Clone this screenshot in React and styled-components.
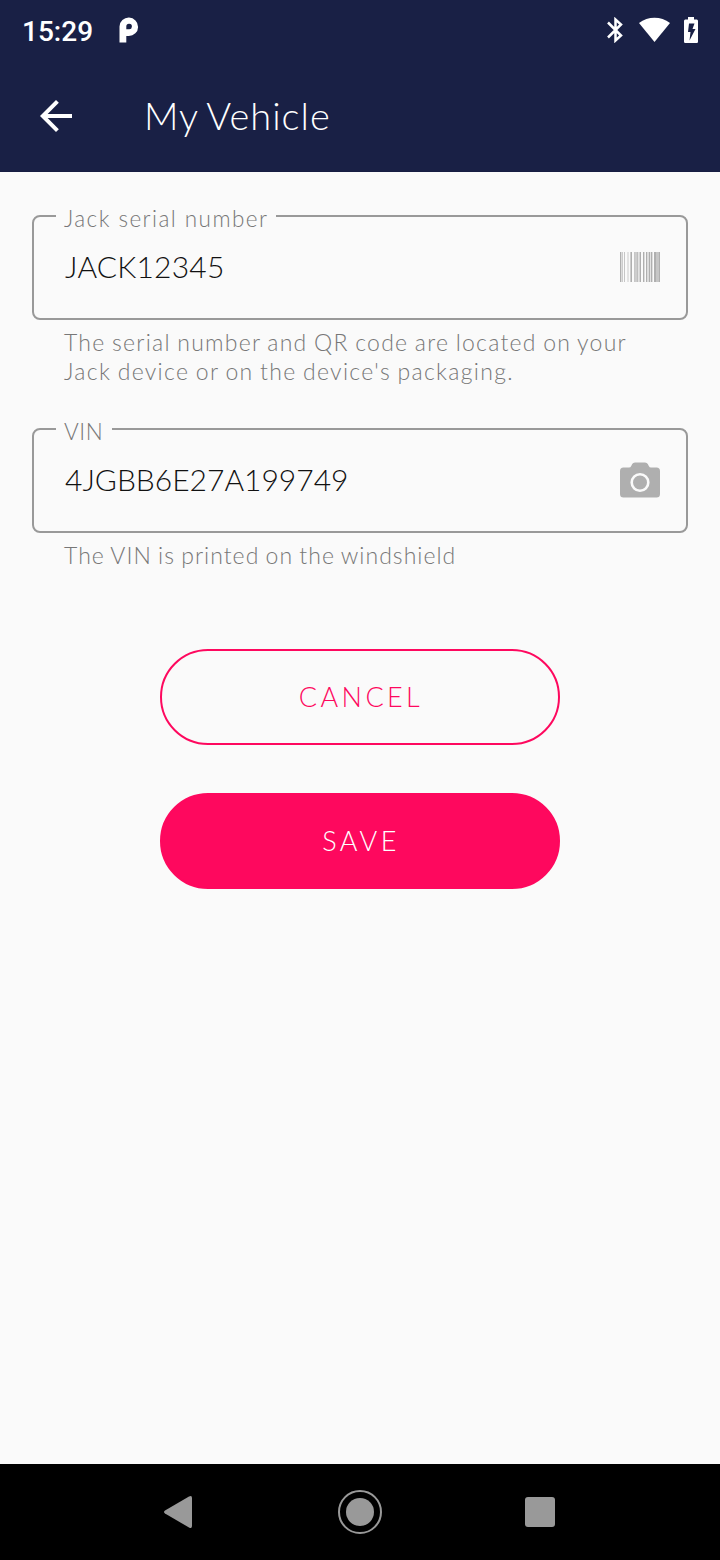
import React from 'react';
import styled, { createGlobalStyle } from 'styled-components';

const GlobalStyle = createGlobalStyle`
	* {
		box-sizing: border-box;
	}

	body {
		margin: 0;
		background: #fafafa;
		font-family: Lato, "Liberation Sans", sans-serif;
		font-weight: 300;
	}
`;

const Screen = styled.div`
	display: flex;
	flex-direction: column;
	width: 720px;
	height: 1560px;
	background: #fafafa;
`;

const StatusBar = styled.div`
	display: flex;
	align-items: center;
	height: 60px;
	padding: 0 22px;
	background: #192045;
	color: #fff;
`;

const Clock = styled.span`
	width: 97px;
	padding-top: 3px;
	font-family: Roboto, sans-serif;
	font-size: 28px;
	font-weight: 500;
	line-height: 57px;
`;

const StatusIcons = styled.div`
	display: flex;
	align-items: center;
	gap: 14px;
	margin-left: auto;
`;

const Header = styled.header`
	display: flex;
	align-items: center;
	height: 112px;
	padding-left: 40px;
	background: #192045;
	box-shadow: inset 0 -1px 0 #171d42;
	color: #fff;
`;

const BackButton = styled.button`
	display: flex;
	width: 104px;
	padding: 0;
	border: 0;
	background: none;
	color: inherit;
`;

const Title = styled.h1`
	margin: 0;
	padding-bottom: 2px;
	font-size: 38px;
	font-weight: 300;
	line-height: 48px;
	letter-spacing: 1px;
	word-spacing: -2px;
`;

const Form = styled.form`
	display: flex;
	flex: 1;
	flex-direction: column;
	padding: 30px 32px 0;
`;

const FieldGroup = styled.div`
	height: ${props => props.$height}px;
`;

const Outline = styled.fieldset`
	display: block;
	height: 118px;
	margin: 0;
	padding: 0 26px 0 31px;
	border: 2px solid #999;
	border-radius: 8px;
`;

const Label = styled.legend`
	height: 28px;
	width: ${props => props.$width}px;
	margin-left: -9px;
	padding: 3px 0 0 8px;
	color: #777;
	font-size: 22.500px;
	line-height: 28px;
	letter-spacing: ${props => props.$spacing}px;
	white-space: nowrap;
`;

const InputRow = styled.div`
	display: flex;
	align-items: center;
	justify-content: space-between;
	height: 74px;
`;

const Value = styled.span`
	padding-bottom: 2px;
	color: #111;
	font-size: 30px;
	line-height: 40px;
	letter-spacing: ${props => props.$spacing}px;
`;

const Hint = styled.p`
	margin: 0;
	padding: 8px 0 0 32px;
	color: #777;
	font-size: 23px;
	line-height: 29px;
	word-spacing: -1px;
	white-space: nowrap;
`;

const HintLine = styled.span`
	display: block;
	letter-spacing: ${props => props.$spacing}px;
`;

const Actions = styled.div`
	display: flex;
	flex-direction: column;
	align-items: center;
	gap: 48px;
`;

const PillButton = styled.button`
	width: 400px;
	height: 96px;
	padding: 0 0 2px 2px;
	border: 2px solid #fe085e;
	border-radius: 48px;
	background: ${props => props.$filled ? '#fe085e' : 'transparent'};
	color: ${props => props.$filled ? '#fff' : '#fe085e'};
	font-family: inherit;
	font-size: 27px;
	font-weight: 300;
	letter-spacing: 3.400px;
`;

const NavBar = styled.nav`
	display: flex;
	align-items: center;
	justify-content: space-between;
	height: 96px;
	padding: 0 165px 0 164px;
	background: #000;
`;

// [x, opacity] of every bar, one unit wide
const BARS = [
	[0, 1], [1, .4], [2, .6], [4, .7], [7, .3], [8, .3], [10, .6], [11, 1],
	[14, .7], [15, .6], [16, .6], [17, .8], [18, .3], [19, .5], [20, 1],
	[23, 1], [24, .4], [26, 1], [27, .4], [28, .4], [29, 1], [30, .3], [31, 1],
	[32, .4], [34, 1], [35, 1], [36, .7], [37, .7], [38, .7], [39, 1],
];

const BarcodeIcon = () => (
	<svg width="40" height="30" viewBox="0 0 40 30" fill="#afafaf" shapeRendering="crispEdges">
		{BARS.map(([x, opacity]) => <rect key={x} x={x} width="1" height="30" opacity={opacity} />)}
	</svg>
);

const CameraIcon = () => (
	<svg width="40" height="36" viewBox="0 0 40 36">
		<path fill="#afafaf" d="M3.500 5.500H9q1.500 0 2.200-1.500l1-2Q13 .5 15 .5h10q2 0 2.800 1.500l1 2q.7 1.500 2.200 1.500h5.500Q40 5.500 40 9v23q0 3.500-3.500 3.500h-33Q0 35.500 0 32V9q0-3.500 3.500-3.500z" />
		<circle cx="20" cy="20.500" r="8.300" fill="none" stroke="#fafafa" strokeWidth="2.600" />
	</svg>
);

const ParkingIcon = () => (
	<svg width="20" height="26" viewBox="0 0 20 26">
		<path fill="#fff" fillRule="evenodd" d="M.5 25.500V9.500a9.300 9.200 0 1 1 9.300 9.500H7.300v6.500zM7.300 12.300h2.500a2.800 2.800 0 1 0-2.500-2.800z" />
	</svg>
);

const BluetoothIcon = () => (
	<svg width="18" height="26" viewBox="0 0 18 26" fill="none" stroke="#fff" strokeWidth="2.500">
		<path d="M2 5.500l13 13L9.500 23.500V2.500l5.500 5-13 13" />
	</svg>
);

const WifiIcon = () => (
	<svg width="32" height="26" viewBox="0 0 32 26">
		<path fill="#fff" d="M1 6C10-1 23-1 32 6L16.500 25z" />
	</svg>
);

const BatteryIcon = () => (
	<svg width="14" height="26" viewBox="0 0 14 26">
		<path fill="#fff" fillRule="evenodd" d="M4 0h6v2.500h2.800Q14 2.500 14 4v20.700q0 1.300-1.200 1.300H1.200Q0 26 0 24.700V4q0-1.500 1.200-1.500H4zM5 6.500L4 15h2.500L5.500 23.500l6-11.500H8.500L10.500 6.500z" />
	</svg>
);

const App = () => (
	<Screen>
		<GlobalStyle />

		<StatusBar>
			<Clock>15:29</Clock>
			<ParkingIcon />
			<StatusIcons>
				<BluetoothIcon />
				<WifiIcon />
				<BatteryIcon />
			</StatusIcons>
		</StatusBar>

		<Header>
			<BackButton type="button" aria-label="Back">
				<svg width="32" height="32" viewBox="4 4 16 16" fill="#fff">
					<path d="M20 11H7.830l5.590-5.590L12 4l-8 8 8 8 1.410-1.410L7.830 13H20v-2z" />
				</svg>
			</BackButton>
			<Title>My Vehicle</Title>
		</Header>

		<Form>
			<FieldGroup $height={213}>
				<Outline>
					<Label $width={220} $spacing={1.45}>Jack serial number</Label>
					<InputRow>
						<Value $spacing={.2}>JACK12345</Value>
						<BarcodeIcon />
					</InputRow>
				</Outline>
				<Hint>
					<HintLine $spacing={1.25}>The serial number and QR code are located on your</HintLine>
					<HintLine $spacing={1.3}>Jack device or on the device's packaging.</HintLine>
				</Hint>
			</FieldGroup>

			<FieldGroup $height={234}>
				<Outline>
					<Label $width={56} $spacing={.6}>VIN</Label>
					<InputRow>
						<Value $spacing={0}>4JGBB6E27A199749</Value>
						<CameraIcon />
					</InputRow>
				</Outline>
				<Hint>
					<HintLine $spacing={1.02}>The VIN is printed on the windshield</HintLine>
				</Hint>
			</FieldGroup>

			<Actions>
				<PillButton type="button">CANCEL</PillButton>
				<PillButton type="button" $filled>SAVE</PillButton>
			</Actions>
		</Form>

		<NavBar>
			<svg width="31" height="32" viewBox="0 0 31 32">
				<path fill="#999" d="M1 14.500L25 .5q3-1.500 3 1.500v28q0 3-3 1.500L1 17.500q-2-1.500 0-3z" />
			</svg>
			<svg width="44" height="44" viewBox="0 0 44 44">
				<circle cx="22" cy="22" r="21" fill="none" stroke="#999" strokeWidth="2" />
				<circle cx="22" cy="22" r="14" fill="#999" />
			</svg>
			<svg width="30" height="30" viewBox="0 0 30 30">
				<rect width="30" height="30" rx="3" fill="#999" />
			</svg>
		</NavBar>
	</Screen>
);

export default App;
